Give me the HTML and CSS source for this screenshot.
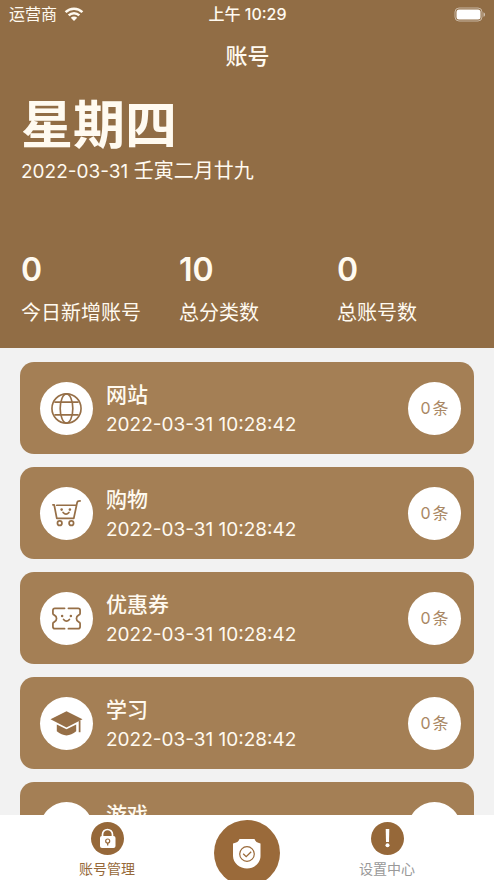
FILE: index.html
```html
<!DOCTYPE html>
<html lang="zh-CN">
<head>
<meta charset="utf-8">
<meta name="viewport" content="width=device-width, initial-scale=1">
<title>账号</title>
<link rel="stylesheet" href="styles.css">
</head>
<body>
<div class="app">
  <header class="hero">
    <div class="status">
      <div class="carrier">
        <span>运营商</span>
        <svg class="wifi" viewBox="0 0 20 14" aria-hidden="true">
          <path d="M1.600 5.200a12 12 0 0 1 16.800 0M4.700 8.400a7.600 7.600 0 0 1 10.600 0" fill="none" stroke="currentColor" stroke-width="2.500"/>
          <path d="M10 14 6.800 10.800a4.600 4.600 0 0 1 6.400 0z" fill="currentColor"/>
        </svg>
      </div>
      <time class="clock">上午 10:29</time>
      <svg class="battery" viewBox="0 0 32 15" aria-hidden="true">
        <rect x="1" y="1" width="27" height="13" rx="4" fill="none" stroke="#fff" stroke-opacity=".5"/>
        <rect x="2.500" y="2.500" width="24" height="10" rx="2.500" fill="#fff"/>
        <path d="M29.500 5.200c2 .8 2 3.800 0 4.600z" fill="#fff" fill-opacity=".6"/>
      </svg>
    </div>
    <h1 class="title">账号</h1>
    <p class="weekday">星期四</p>
    <p class="today"><span class="digits">2022-03-31</span> 壬寅二月廿九</p>
    <dl class="stats">
      <div class="stat"><dt>今日新增账号</dt><dd>0</dd></div>
      <div class="stat"><dt>总分类数</dt><dd>10</dd></div>
      <div class="stat"><dt>总账号数</dt><dd>0</dd></div>
    </dl>
  </header>

  <main class="list">
    <article class="card">
      <span class="disc">
        <svg class="icon" viewBox="0 0 34 34" aria-hidden="true">
          <g fill="none" stroke="currentColor" stroke-width="1.700"><circle cx="17" cy="17" r="15"/><ellipse cx="17" cy="17" rx="6.500" ry="15"/><path d="M4.500 10.500h25M4.500 23.500h25"/></g>
        </svg>
      </span>
      <div class="info"><h2>网站</h2><time>2022-03-31 10:28:42</time></div>
      <span class="disc count"><span>0</span><span>条</span></span>
    </article>
    <article class="card">
      <span class="disc">
        <svg class="icon" viewBox="0 0 34 34" aria-hidden="true">
          <g fill="none" stroke="currentColor" stroke-width="1.800" stroke-linecap="round" stroke-linejoin="round"><path d="M7 8.500h19.500M3 8h1.300l2.700 14h17.500l3.500-16.500q.3-1.500 3-1.500"/><path d="M13.500 16q3 3.500 6 0"/><circle cx="10" cy="27" r="2.300"/><circle cx="22" cy="27" r="2.300"/></g>
          <circle cx="12" cy="13" r="1.300" fill="currentColor"/><circle cx="20.500" cy="13" r="1.300" fill="currentColor"/>
        </svg>
      </span>
      <div class="info"><h2>购物</h2><time>2022-03-31 10:28:42</time></div>
      <span class="disc count"><span>0</span><span>条</span></span>
    </article>
    <article class="card">
      <span class="disc">
        <svg class="icon" viewBox="0 0 34 34" aria-hidden="true">
          <g fill="none" stroke="currentColor" stroke-width="1.800" stroke-linecap="round" stroke-linejoin="round"><path d="M15 6.500H5Q3 6.500 3 8.500v3.300c0 1 .8 1.400 1.500 1.700 3 1.400 3 5.600 0 7-.7.3-1.500.7-1.500 1.700v3.300q0 2 2 2h10M19 6.500h10q2 0 2 2v3.300c0 1-.8 1.400-1.500 1.700-3 1.400-3 5.600 0 7 .7.300 1.500.7 1.500 1.700v3.300q0 2-2 2H19"/><path d="M14 18q3 3.500 6 0"/></g>
          <circle cx="12.500" cy="14.500" r="1.300" fill="currentColor"/><circle cx="21.500" cy="14.500" r="1.300" fill="currentColor"/>
        </svg>
      </span>
      <div class="info"><h2>优惠券</h2><time>2022-03-31 10:28:42</time></div>
      <span class="disc count"><span>0</span><span>条</span></span>
    </article>
    <article class="card">
      <span class="disc">
        <svg class="icon" viewBox="0 0 34 34" aria-hidden="true">
          <path d="M17 4.500 33.500 12.500 17 21 .5 12.500z" fill="currentColor"/>
          <path d="M7 18 17 23l10-5v7q-10 8.500-20 0z" fill="currentColor"/>
          <path d="M30.500 14v12" fill="none" stroke="currentColor" stroke-width="1.800"/>
        </svg>
      </span>
      <div class="info"><h2>学习</h2><time>2022-03-31 10:28:42</time></div>
      <span class="disc count"><span>0</span><span>条</span></span>
    </article>
    <article class="card">
      <span class="disc"></span>
      <div class="info"><h2>游戏</h2><time>2022-03-31 10:28:42</time></div>
      <span class="disc count"><span>0</span><span>条</span></span>
    </article>
  </main>

  <nav class="tabs">
    <a class="tab active" href="#accounts">
      <svg class="tab-icon" viewBox="0 0 33 33" aria-hidden="true">
        <circle cx="16.500" cy="16.500" r="16.500" fill="#966839"/>
        <path d="M11.500 15v-2.500a5 5 0 0 1 10 0V15" fill="none" stroke="#fff" stroke-width="1.700"/>
        <rect x="9" y="14" width="15.500" height="12" rx="2" fill="#fff"/>
        <circle cx="16.700" cy="19" r="2" fill="none" stroke="#966839" stroke-width="1.200"/><path d="M16.700 21v2.500" stroke="#966839" stroke-width="1.300"/>
      </svg>
      <span>账号管理</span>
    </a>
    <button class="shield" type="button" aria-label="安全">
      <svg viewBox="0 0 66 66" aria-hidden="true">
        <path d="M25.500 19h15q1 3.500 6 4.500v12.500c0 7-6.500 12.500-13.500 12.500S19 43 19 36V23.500q5.500-1 6.500-4.500z" fill="#fff"/>
        <circle cx="33" cy="34" r="7.300" fill="none" stroke="#9a6a3a" stroke-width="1.200"/>
        <path d="m29.200 33.700 3 3 5-5" fill="none" stroke="#9a6a3a" stroke-width="1.300"/>
      </svg>
    </button>
    <a class="tab" href="#settings">
      <svg class="tab-icon" viewBox="0 0 33 33" aria-hidden="true">
        <circle cx="16.500" cy="16.500" r="16.500" fill="#966839"/>
        <path d="M14.700 7h3.600l-.3 13h-3z" fill="#fff"/><circle cx="16.500" cy="23.200" r="2" fill="#fff"/>
      </svg>
      <span>设置中心</span>
    </a>
  </nav>
</div>
</body>
</html>
```
FILE: styles.css
```css
* {
  box-sizing: border-box;
}

body,
h1,
h2,
p,
dl,
dd {
  margin: 0;
}

body {
  font-family: Inter, "Noto Sans CJK SC", sans-serif;
  background: #f2f2f2;
}

.app {
  display: flex;
  flex-direction: column;
  height: 100vh;
  overflow: hidden;
}

.hero {
  flex: none;
  padding: 0 20px 19px 21px;
  background: #916d45;
  color: #fffaf0;
}

.status {
  display: grid;
  grid-template-columns: 1fr auto 1fr;
  align-items: center;
  height: 28px;
  margin: 0 -12px;
  font-size: 16px;
  line-height: 28px;
}

.carrier {
  display: flex;
  align-items: center;
  gap: 7px;
}

.wifi {
  width: 20px;
  height: 14px;
}

.clock {
  font-weight: 500;
}

.battery {
  justify-self: end;
  width: 32px;
  height: 15px;
}

.title {
  margin-top: 12px;
  font-size: 22px;
  font-weight: 500;
  line-height: 32px;
  text-align: center;
}

.weekday {
  margin-top: 22px;
  font-size: 52px;
  font-weight: 700;
  line-height: 64px;
}

.today {
  font-size: 20px;
  line-height: 26px;
}

.digits {
  font-size: 19px;
}

.stats {
  display: grid;
  grid-template-columns: repeat(3, 158px);
  margin-top: 65px;
}

.stat {
  display: flex;
  flex-direction: column-reverse;
  gap: 7px;
}

.stat dt {
  font-size: 20px;
  line-height: 32px;
}

.stat dd {
  font-size: 32px;
  font-weight: 600;
  line-height: 40px;
}

.list {
  display: flex;
  flex: 1;
  flex-direction: column;
  gap: 13px;
  min-height: 0;
  padding: 14px 20px 0;
  overflow: hidden;
}

.card {
  display: flex;
  flex: none;
  align-items: center;
  gap: 13px;
  height: 92px;
  padding: 0 13px 0 20px;
  border-radius: 14px;
  background: #a47f55;
  color: #fffaf0;
}

.disc {
  display: flex;
  flex: none;
  align-items: center;
  justify-content: center;
  width: 53px;
  height: 53px;
  border-radius: 50%;
  background: #fff;
  color: #966f47;
}

.icon {
  width: 33px;
  height: 33px;
}

.info {
  flex: 1;
  padding-top: 4px;
}

.info h2 {
  font-size: 21px;
  font-weight: 500;
  line-height: 30px;
}

.info time {
  display: block;
  font-size: 19px;
  line-height: 30px;
}

.count {
  align-items: baseline;
  gap: 2px;
  color: #a98764;
  font-size: 16px;
  line-height: 53px;
}

.tabs {
  display: grid;
  flex: none;
  grid-template-columns: repeat(3, 1fr);
  justify-items: center;
  height: 65px;
  padding: 0 37px;
  background: #fff;
}

.tab {
  display: flex;
  flex-direction: column;
  align-items: center;
  padding-top: 7px;
  color: #999;
  font-size: 14px;
  line-height: 28px;
  text-decoration: none;
}

.tab.active {
  color: #966839;
}

.tab-icon {
  width: 33px;
  height: 33px;
}

.shield {
  width: 66px;
  height: 66px;
  margin-top: 5px;
  padding: 0;
  border: 0;
  border-radius: 50%;
  background: #9a6a3a;
}

.shield svg {
  display: block;
  width: 100%;
}
```
